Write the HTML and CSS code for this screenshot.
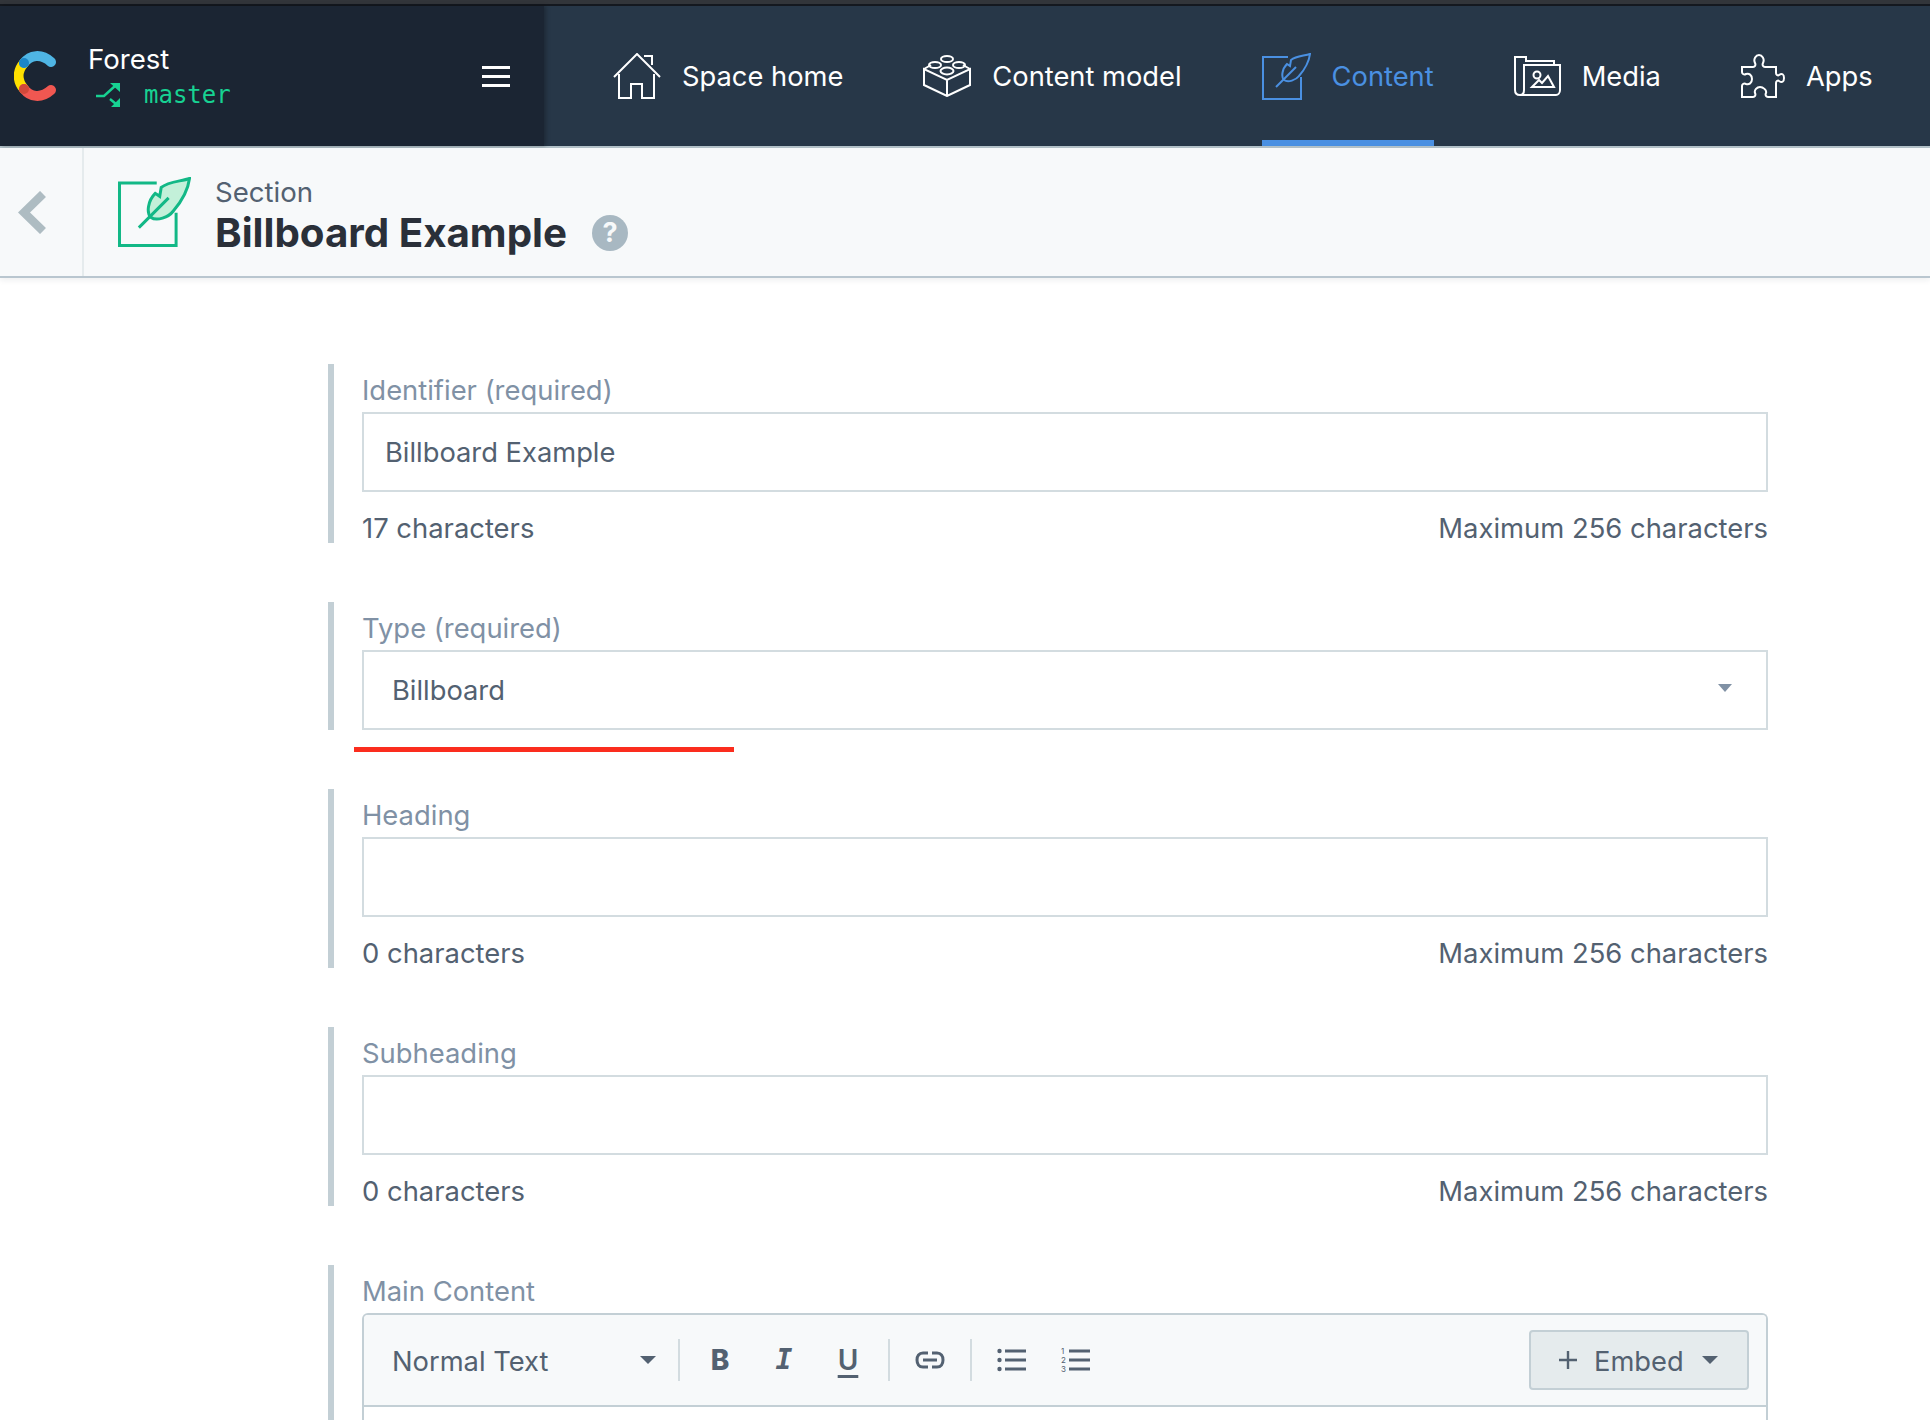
FILE: index.html
```html
<!DOCTYPE html>
<html lang="en">
<head>
<meta charset="utf-8">
<title>Billboard Example</title>
<link rel="stylesheet" href="styles.css">
</head>
<body>
<div class="strip"></div>
<nav class="appbar">
  <div class="space">
    <svg class="logo" viewBox="0 0 42 50" width="42" height="50" fill="none" stroke-width="10" stroke-linecap="round">
      <path d="M10 12C3 20 3 30 10 38" stroke="#ffe000"/>
      <path d="M10 12C16 4 27 2 37 11" stroke="#4fb5e4"/>
      <path d="M10 38C16 46 27 48 37 39" stroke="#f05751"/>
      <circle cx="10" cy="12" r="5" fill="#1c86c8"/>
      <circle cx="10" cy="38" r="5" fill="#d2483a"/>
    </svg>
    <div class="space-names">
      <div class="space-name">Forest</div>
      <div class="branch">
        <svg viewBox="0 0 24 24" width="24" height="24" fill="none" stroke="#17d292" stroke-width="2.4">
          <path d="M0 13H8L19 3M14 16L20 21"/>
          <path d="M14 0H24V9Z M24 15V24H15Z" fill="#17d292" stroke="none"/>
        </svg>
        <span>master</span>
      </div>
    </div>
    <div class="burger"><i></i><i></i><i></i></div>
  </div>
  <div class="tabs">
    <a class="tab">
      <svg class="tab-icon" viewBox="0 0 48 46" width="48" height="46"><path d="M1 24L24 1L47 24M6 21V45H18V31H29V45H41V21M31 3H39V12"/></svg>
      <span>Space home</span>
    </a>
    <a class="tab">
      <svg class="tab-icon" viewBox="0 0 48 42" width="48" height="42"><path d="M1 14V30L24 41L47 30V14L24 25ZM24 25V41M1 14L8 10M47 14L40 10"/><ellipse cx="24" cy="4" rx="6" ry="3"/><ellipse cx="12" cy="10" rx="6" ry="3"/><ellipse cx="36" cy="10" rx="6" ry="3"/><ellipse cx="24" cy="16" rx="6.500" ry="3.500"/></svg>
      <span>Content model</span>
    </a>
    <a class="tab tab-active">
      <svg class="tab-icon" viewBox="0 0 49 47" width="49" height="47"><path d="M26 4H1V46H39V24"/><path d="M48 1C42 3 34 3 29 7L28 13L25 11C20 16 19 24 22 27C26 30 34 27 37 23C43 16 47 9 48 1Z"/><path d="M14 34L34 14"/></svg>
      <span>Content</span>
    </a>
    <a class="tab">
      <svg class="tab-icon" viewBox="0 0 47 41" width="47" height="41"><path d="M6 39C3 39 1 37 1 34V1H12V5H40V9"/><path d="M6 39C9 39 10 37 10 34V9H46V34C46 37 44 39 42 39H6Z"/><circle cx="23" cy="19" r="3.500"/><path d="M18 31L25 24L28 27L34 20L40 31Z"/></svg>
      <span>Media</span>
    </a>
    <a class="tab">
      <svg class="tab-icon" viewBox="0 0 44 44" width="44" height="44"><path d="M1 13H12C14 13 15 11 14 9C12 5 15 1 18 1C21 1 24 5 22 9C21 11 22 13 24 13H35V19C35 21 37 22 38 21C41 19 43 20 43 24C43 28 41 29 38 27C37 26 35 27 35 29V43H27C25 43 24 41 25 39C26 36 22 33 19 33C16 33 13 36 14 39C15 41 14 43 12 43H1V32C1 30 3 29 5 30C8 31 11 29 11 25C11 21 8 19 5 20C3 21 1 20 1 18Z"/></svg>
      <span>Apps</span>
    </a>
  </div>
</nav>
<header class="entry-head">
  <div class="back">
    <svg viewBox="0 0 28 43" width="28" height="43" fill="none" stroke="#aebcc2" stroke-width="8.500"><path d="M25 3L6 21.500L25 40"/></svg>
  </div>
  <svg class="entry-icon" viewBox="0 0 49 47" width="73" height="70" fill="none" stroke="#12b886" stroke-width="2"><path d="M26 4H1V46H39V24"/><path d="M48 1C42 3 34 3 29 7L28 13L25 11C20 16 19 24 22 27C26 30 34 27 37 23C43 16 47 9 48 1Z" fill="#c3f0d9"/><path d="M14 34L34 14"/></svg>
  <div class="entry-text">
    <div class="entry-type">Section</div>
    <h1 class="entry-title">Billboard Example</h1>
  </div>
  <div class="help">?</div>
</header>
<main class="form">
  <section class="field">
    <label class="field-label">Identifier (required)</label>
    <div class="input">Billboard Example</div>
    <div class="meta"><span>17 characters</span><span>Maximum 256 characters</span></div>
  </section>
  <section class="field field-select">
    <label class="field-label">Type (required)</label>
    <div class="input select"><span>Billboard</span><i class="caret caret-light"></i></div>
    <div class="red-line"></div>
  </section>
  <section class="field">
    <label class="field-label">Heading</label>
    <div class="input"></div>
    <div class="meta"><span>0 characters</span><span>Maximum 256 characters</span></div>
  </section>
  <section class="field">
    <label class="field-label">Subheading</label>
    <div class="input"></div>
    <div class="meta"><span>0 characters</span><span>Maximum 256 characters</span></div>
  </section>
  <section class="field field-last">
    <label class="field-label">Main Content</label>
    <div class="editor">
      <div class="toolbar">
        <div class="format"><span>Normal Text</span><i class="caret"></i></div>
        <b class="sep"></b>
        <div class="tool tool-b">B</div>
        <div class="tool tool-i">I</div>
        <div class="tool tool-u">U</div>
        <b class="sep"></b>
        <div class="tool">
          <svg viewBox="0 0 30 18" width="30" height="18" fill="none" stroke="#536171" stroke-width="3"><path d="M13 2H8C4 2 2 5 2 9C2 13 4 16 8 16H13M17 2H22C26 2 28 5 28 9C28 13 26 16 22 16H17M8 9H22"/></svg>
        </div>
        <b class="sep"></b>
        <div class="tool">
          <svg viewBox="0 0 30 24" width="30" height="24" fill="#536171"><circle cx="2.500" cy="3" r="2.200"/><circle cx="2.500" cy="12" r="2.200"/><circle cx="2.500" cy="21" r="2.200"/><rect x="8" y="1.500" width="21" height="3"/><rect x="8" y="10.500" width="21" height="3"/><rect x="8" y="19.500" width="21" height="3"/></svg>
        </div>
        <div class="tool">
          <svg viewBox="0 0 30 26" width="30" height="26" fill="#536171"><text x="0" y="7" class="ol-num">1</text><text x="0" y="16" class="ol-num">2</text><text x="0" y="25" class="ol-num">3</text><rect x="8" y="2.500" width="21" height="3"/><rect x="8" y="11.500" width="21" height="3"/><rect x="8" y="20.500" width="21" height="3"/></svg>
        </div>
        <div class="embed">
          <svg viewBox="0 0 20 20" width="20" height="20" fill="none" stroke="#536171" stroke-width="2.400"><path d="M10 1V19M1 10H19"/></svg>
          <span>Embed</span>
          <i class="caret"></i>
        </div>
      </div>
    </div>
  </section>
</main>
</body>
</html>
```
FILE: styles.css
```css
* { box-sizing: border-box; }
html, body { margin: 0; overflow: hidden; background: #fff; }
body { font-family: Inter, "Liberation Sans", sans-serif; color: #536171; width: 1930px; height: 1420px; display: flex; flex-direction: column; }

.strip { height: 6px; flex: none; background: #32353a; border-bottom: 2px solid #14181f; }

.appbar { height: 142px; flex: none; display: flex; background: #273748; border-bottom: 2px solid #b4c3ca; }
.space { width: 544px; flex: none; display: flex; align-items: center; padding-left: 14px; padding-right: 34px; background: #1b2533; box-shadow: 2px 0 4px rgba(0,0,0,.25); }
.logo { flex: none; }
.space-names { margin-left: 32px; padding-top: 2px; }
.space-name { font-size: 27.6px; line-height: 35px; color: #fff; }
.branch { display: flex; align-items: center; height: 35px; padding-left: 8px; gap: 24px; font-family: "DejaVu Sans Mono", monospace; font-size: 24px; color: #17d292; }
.burger { margin-left: auto; display: flex; flex-direction: column; gap: 6px; }
.burger i { display: block; width: 28px; height: 3px; background: #fff; }

.tabs { display: flex; padding-left: 69px; gap: 80px; }
.tab { display: flex; align-items: center; gap: 20px; font-size: 27.3px; line-height: 36px; color: #fff; height: 140px; }
.tab span { padding-top: 2px; margin-left: 1px; }
.tab-icon { fill: none; stroke: #fff; stroke-width: 2; flex: none; }
.tab-active { color: #4a90e2; border-bottom: 6px solid #4a90e2; padding-top: 6px; }
.tab-active .tab-icon { stroke: #4a90e2; }

.entry-head { height: 130px; flex: none; display: flex; align-items: center; background: #f7f9fa; border-bottom: 2px solid #b9c6cf; box-shadow: 0 2px 6px rgba(25,37,50,.08); }
.back { width: 84px; height: 128px; flex: none; display: flex; align-items: center; padding-left: 18px; border-right: 2px solid #e5ebed; }
.entry-icon { margin-left: 34px; flex: none; }
.entry-text { margin-left: 24px; padding-top: 6px; }
.entry-type { font-size: 27.6px; line-height: 36px; }
.entry-title { margin: 0; font-size: 40.3px; line-height: 46px; font-weight: 700; color: #2a3039; }
.help { margin-left: 25px; margin-top: 42px; width: 36px; height: 36px; border-radius: 50%; background: #a8b8c2; color: #f7f9fa; font-size: 27px; font-weight: 700; line-height: 36px; text-align: center; }

.form { flex: 1; min-height: 0; padding: 86px 162px 0 328px; display: flex; flex-direction: column; gap: 59px; }
.field { border-left: 6px solid #c3cfd5; padding-left: 28px; flex: none; }
.field-label { display: block; height: 48px; font-size: 27.4px; line-height: 52px; color: #8091a5; }
.input { height: 80px; border: 2px solid #d3dce0; font-size: 27.3px; line-height: 78px; padding-left: 21px; color: #536171; }
.meta { display: flex; justify-content: space-between; height: 51px; padding-top: 19px; font-size: 27.4px; line-height: 34px; }

.field-select { position: relative; }
.select { display: flex; justify-content: space-between; align-items: center; padding-left: 28px; padding-right: 34px; }
.select span { padding-top: 2px; }
.caret { width: 0; height: 0; border-left: 8px solid transparent; border-right: 8px solid transparent; border-top: 8px solid #536171; flex: none; }
.caret-light { border-left-width: 7px; border-right-width: 7px; border-top-color: #8091a5; margin-top: -5px; }
.red-line { position: absolute; left: 20px; bottom: -22px; width: 380px; height: 5px; background: #fb2d1e; }

.field-last { flex: 1; min-height: 0; display: flex; flex-direction: column; }
.editor { flex: 1; min-height: 0; border: 2px solid #c3cfd5; border-bottom: 0; border-radius: 6px 6px 0 0; }
.toolbar { height: 92px; display: flex; align-items: center; background: #f7f9fa; border-bottom: 2px solid #c3cfd5; padding-left: 28px; padding-right: 17px; border-radius: 4px 4px 0 0; }
.format { width: 264px; flex: none; display: flex; justify-content: space-between; align-items: center; font-size: 27.3px; }
.format span { padding-top: 2px; }
.sep { width: 2px; height: 42px; background: #d3dce0; margin: 0 8px; flex: none; }
.format + .sep { margin-left: 22px; }
.tool { width: 64px; display: flex; justify-content: center; align-items: center; flex: none; color: #536171; font-size: 28px; line-height: 32px; }
.tool-b { font-weight: 800; }
.tool-i { font-family: "DejaVu Sans Mono", monospace; font-weight: 700; font-style: italic; }
.tool-u { font-weight: 600; text-decoration: underline; text-underline-offset: 5px; text-decoration-thickness: 3px; }
.ol-num { font-family: Inter, sans-serif; font-size: 8px; }
.embed { margin-left: auto; width: 220px; height: 60px; flex: none; display: flex; align-items: center; padding-left: 27px; background: #e5ebed; border: 2px solid #c3cfd5; border-radius: 4px; font-size: 27.3px; }
.embed span { margin-left: 16px; padding-top: 2px; }
.embed .caret { margin-left: 18px; }
```
